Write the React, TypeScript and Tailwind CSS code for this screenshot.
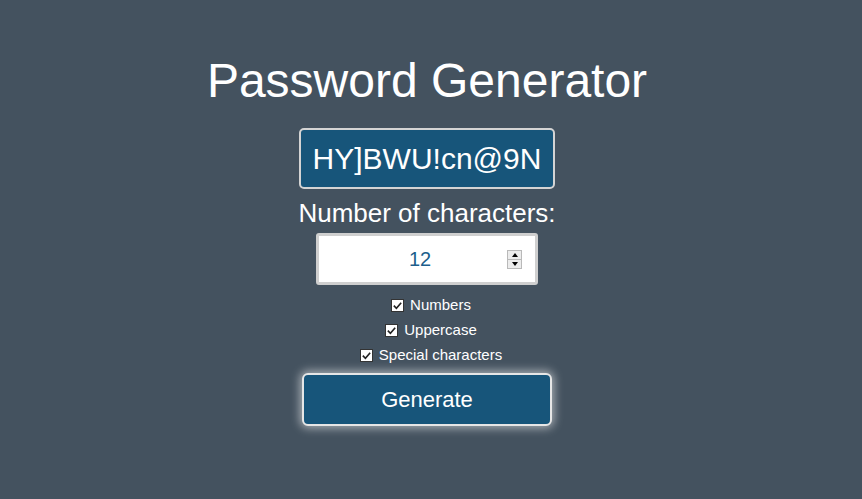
import { useState } from 'react';

const options = [
  { id: 'numbers', label: 'Numbers' },
  { id: 'uppercase', label: 'Uppercase' },
  { id: 'special', label: 'Special characters' },
];

function Check({ label }: { label: string }) {
  return (
    <label className="flex items-center h-[25px] gap-[6px] text-[15px] text-white">
      <span className="flex items-center justify-center w-[13px] h-[13px] bg-white border border-[#333]">
        <svg viewBox="0 0 12 12" className="w-[11px] h-[11px]" fill="none" stroke="#222" strokeWidth="1.8">
          <path d="M2 6.2 L4.8 9 L10 3" />
        </svg>
      </span>
      {label}
    </label>
  );
}

export default function App() {
  const [count, setCount] = useState(12);

  return (
    <div className="min-h-[499px] bg-[#44525f] flex flex-col items-center pr-[8px] font-['Liberation_Sans',Arial,sans-serif] text-white">
      <h1 className="mt-[53px] text-[48px] leading-[56px]">Password Generator</h1>

      <div className="mt-[19px] px-[12px] h-[61px] flex items-center bg-[#17557a] border-2 border-[#d4d4d4] rounded-[5px] text-[30px]">
        HY]BWU!cn@9N
      </div>

      <p className="mt-[9px] text-[26px] leading-[30px]">Number of characters:</p>

      <div className="relative mt-[5px] w-[222px] h-[52px] flex items-center bg-white border-[3px] border-[#cfcfcf] rounded-[3px]">
        <input
          type="text"
          value={count}
          onChange={(e) => setCount(Number(e.target.value) || 0)}
          className="w-full h-full pr-[14px] text-center text-[20px] text-[#1d5f8c] outline-none bg-transparent"
        />
        <div className="absolute right-[13px] top-[14px] flex flex-col w-[15px] h-[19px] border border-[#b9b9b9] bg-[#ececec]">
          <button className="flex-1 flex items-center justify-center border-b border-[#b9b9b9]" onClick={() => setCount(count + 1)}>
            <span className="w-0 h-0 border-x-[3.5px] border-x-transparent border-b-[4px] border-b-black" />
          </button>
          <button className="flex-1 flex items-center justify-center" onClick={() => setCount(count - 1)}>
            <span className="w-0 h-0 border-x-[3.5px] border-x-transparent border-t-[4px] border-t-black" />
          </button>
        </div>
      </div>

      <div className="mt-[8px] ml-[8px] flex flex-col items-center">
        {options.map((o) => (
          <Check key={o.id} label={o.label} />
        ))}
      </div>

      <button className="mt-[5px] w-[250px] h-[53px] bg-[#17557a] border-2 border-[#e6e6e6] rounded-[6px] text-[22px] text-white shadow-[0_0_10px_2px_rgba(255,255,255,0.55)]">
        Generate
      </button>
    </div>
  );
}
